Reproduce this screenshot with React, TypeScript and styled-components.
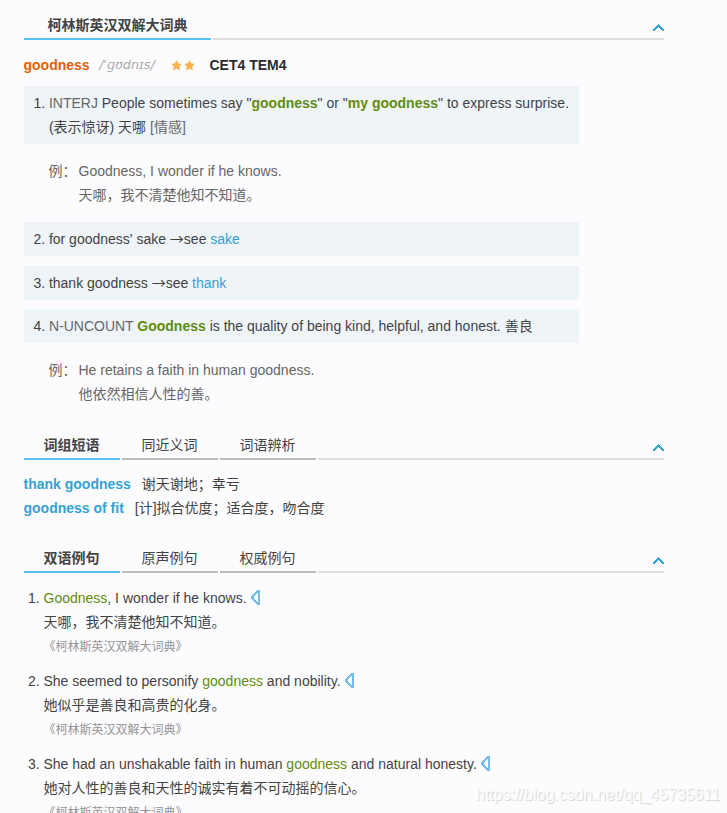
import React from "react";
import styled, { createGlobalStyle } from "styled-components";

const GlobalStyle = createGlobalStyle`
  body {
    margin: 0;
    background: #fcfcfe;
    overflow: hidden;
  }
`;

const Page = styled.main`
  position: relative;
  box-sizing: border-box;
  width: 727px;
  height: 813px;
  padding: 10px 0 0 24px;
  overflow: hidden;
  background: #fcfcfe;
  color: #434343;
  font: 14px/24px "Liberation Sans", "Noto Sans CJK SC", sans-serif;
`;

const Section = styled.section<{ $height?: number }>`
  width: 640px;
  height: ${(p) => (p.$height ? `${p.$height}px` : "auto")};
`;

const TabBar = styled.div`
  display: flex;
  gap: 2px;
  height: 30px;
`;

const Tab = styled.div<{ $active?: boolean; $width?: number }>`
  box-sizing: border-box;
  width: ${(p) => p.$width ?? 96}px;
  height: 30px;
  padding-right: ${(p) => (p.$width ? 0 : 1)}px;
  line-height: 30px;
  text-align: center;
  font-weight: ${(p) => (p.$active ? 700 : 400)};
  border-bottom: 2px solid ${(p) => (p.$active ? "#59c2f1" : "#bbbbbe")};
`;

const TabRest = styled.div`
  box-sizing: border-box;
  flex: 1;
  display: flex;
  justify-content: flex-end;
  padding-top: 14px;
  border-bottom: 2px solid #dcdddd;
`;

const ToggleIcon = styled.svg`
  display: block;
  width: 11px;
  height: 7px;
`;

const WordLine = styled.div`
  display: flex;
  align-items: center;
  height: 24px;
  margin: 13px 0 9px -0.5px;
`;

const Headword = styled.span`
  width: 75.5px;
  color: #e45f06;
  font-weight: 700;
`;

const Phonetic = styled.em`
  width: 72px;
  color: #aaa;
  font-family: "DejaVu Sans", sans-serif;
  font-size: 12.8px;
`;

const Stars = styled.span`
  display: flex;
  gap: 2px;
  width: 38.5px;
`;

const Star = styled.svg`
  width: 11px;
  height: 11px;
`;

const Rank = styled.span`
  color: #2c2c2c;
  font-weight: 700;
`;

const Meaning = styled.div<{ $gap?: number }>`
  box-sizing: border-box;
  display: flex;
  width: 555px;
  padding: 5px 0 5px 9.4px;
  margin-top: ${(p) => p.$gap ?? 0}px;
  background: #eff4f9;
`;

const Index = styled.span`
  flex: none;
  width: 15.5px;
`;

const Pos = styled.span`
  color: #666;
`;

const Key = styled.span<{ $bold?: boolean }>`
  color: #638c0b;
  font-weight: ${(p) => (p.$bold ? 700 : 400)};
`;

const Link = styled.a`
  color: #35a1d4;
`;

const Arrow = styled.span`
  font-family: "Noto Sans CJK SC", sans-serif;
  line-height: 1;
`;

const Example = styled.div`
  display: flex;
  gap: 2px;
  margin: 15px 0;
  padding-left: 24.5px;
  color: #666;
`;

const Phrase = styled.div`
  display: flex;
  gap: 11px;
`;

const PhraseTerm = styled.a`
  color: #35a1d4;
  font-weight: 700;
`;

const PhraseList = styled.div`
  padding-top: 12px;
  margin-left: -0.5px;
`;

const SentenceList = styled.div`
  display: flex;
  flex-direction: column;
  gap: 11px;
  padding: 13px 0 0 4px;
`;

const Sentence = styled.div`
  display: flex;
`;

const EnglishLine = styled.div`
  display: flex;
  gap: 4.5px;
  white-space: pre;
`;

const Speaker = styled.svg`
  width: 10px;
  height: 15px;
  margin-top: 4px;
`;

const Source = styled.div`
  height: 24px;
  color: #959595;
  font-size: 12px;
  line-height: 26px;
`;

const Watermark = styled.div`
  position: absolute;
  left: 476px;
  top: 783px;
  color: #fcfcfe;
  font-size: 16px;
  text-shadow: 1px 1px 1px #d2d2d4;
  white-space: nowrap;
`;

function Chevron() {
  return (
    <ToggleIcon viewBox="0 0 11 7" shapeRendering="crispEdges">
      <path d="M0 7V5h1V4h1V3h1V2h1V1h1V0h1v1h1v1h1v1h1v1h1v1h1v2H9V6H8V5H7V4H6V3H5v1H4v1H3v1H2v1z" fill="#35a1d4" />
    </ToggleIcon>
  );
}

function StarIcon() {
  return (
    <Star viewBox="0 0 11 11">
      <path
        d="M5.5.7l1.4 3 3.3.5-2.4 2.3.6 3.3-2.9-1.5-2.9 1.5.6-3.3L.8 4.2l3.3-.5z"
        fill="#fcb24b"
        stroke="#fcb24b"
        strokeWidth="0.8"
        strokeLinejoin="round"
      />
    </Star>
  );
}

function SpeakerIcon() {
  return (
    <Speaker viewBox="0 0 10 15" shapeRendering="crispEdges">
      <path
        fillRule="evenodd"
        d="M9 0v15H6v-1H5v-1H4v-1H3v-1H2v-1H1V9H0V6h1V5h1V4h1V3h1V2h1V1h1V0zM7 3H6v1H5v1H4v1H3v3h1v1h1v1h1v1h1z"
        fill="#77bdeb"
      />
    </Speaker>
  );
}

function Tabs({ labels, firstWidth }: { labels: string[]; firstWidth?: number }) {
  return (
    <TabBar>
      {labels.map((label, i) => (
        <Tab key={label} $active={i === 0} $width={firstWidth}>
          {label}
        </Tab>
      ))}
      <TabRest>
        <Chevron />
      </TabRest>
    </TabBar>
  );
}

const sentences = [
  { before: "", key: "Goodness", after: ", I wonder if he knows.", zh: "天哪，我不清楚他知不知道。" },
  { before: "She seemed to personify ", key: "goodness", after: " and nobility.", zh: "她似乎是善良和高贵的化身。" },
  {
    before: "She had an unshakable faith in human ",
    key: "goodness",
    after: " and natural honesty.",
    zh: "她对人性的善良和天性的诚实有着不可动摇的信心。",
  },
];

export default function App() {
  return (
    <>
      <GlobalStyle />
      <Page lang="zh-CN">
        <Section $height={420}>
          <Tabs labels={["柯林斯英汉双解大词典"]} firstWidth={187} />
          <WordLine>
            <Headword>goodness</Headword>
            <Phonetic>/ˈɡʊdnɪs/</Phonetic>
            <Stars>
              <StarIcon />
              <StarIcon />
            </Stars>
            <Rank>CET4 TEM4</Rank>
          </WordLine>
          <Meaning>
            <Index>1.</Index>
            <div>
              <Pos>INTERJ</Pos> People sometimes say "<Key $bold>goodness</Key>" or "<Key $bold>my goodness</Key>" to
              express surprise.
              <br />
              (表示惊讶) 天哪 <Pos>[情感]</Pos>
            </div>
          </Meaning>
          <Example>
            <span>例：</span>
            <div>
              Goodness, I wonder if he knows.
              <br />
              天哪，我不清楚他知不知道。
            </div>
          </Example>
          <Meaning>
            <Index>2.</Index>
            <div>
              for goodness' sake <Arrow>→</Arrow>see <Link>sake</Link>
            </div>
          </Meaning>
          <Meaning $gap={10}>
            <Index>3.</Index>
            <div>
              thank goodness <Arrow>→</Arrow>see <Link>thank</Link>
            </div>
          </Meaning>
          <Meaning $gap={9}>
            <Index>4.</Index>
            <div>
              <Pos>N-UNCOUNT</Pos> <Key $bold>Goodness</Key> is the quality of being kind, helpful, and honest. 善良
            </div>
          </Meaning>
          <Example>
            <span>例：</span>
            <div>
              He retains a faith in human goodness.
              <br />
              他依然相信人性的善。
            </div>
          </Example>
        </Section>
        <Section $height={113}>
          <Tabs labels={["词组短语", "同近义词", "词语辨析"]} />
          <PhraseList>
            <Phrase>
              <PhraseTerm>thank goodness</PhraseTerm>
              <span>谢天谢地；幸亏</span>
            </Phrase>
            <Phrase>
              <PhraseTerm>goodness of fit</PhraseTerm>
              <span>[计]拟合优度；适合度，吻合度</span>
            </Phrase>
          </PhraseList>
        </Section>
        <Section>
          <Tabs labels={["双语例句", "原声例句", "权威例句"]} />
          <SentenceList>
            {sentences.map((s, i) => (
              <Sentence key={s.zh}>
                <Index>{i + 1}.</Index>
                <div>
                  <EnglishLine>
                    <span>
                      {s.before}
                      <Key>{s.key}</Key>
                      {s.after}
                    </span>
                    <SpeakerIcon />
                  </EnglishLine>
                  <div>{s.zh}</div>
                  <Source>《柯林斯英汉双解大词典》</Source>
                </div>
              </Sentence>
            ))}
          </SentenceList>
        </Section>
        <Watermark>https://blog.csdn.net/qq_45735611</Watermark>
      </Page>
    </>
  );
}
